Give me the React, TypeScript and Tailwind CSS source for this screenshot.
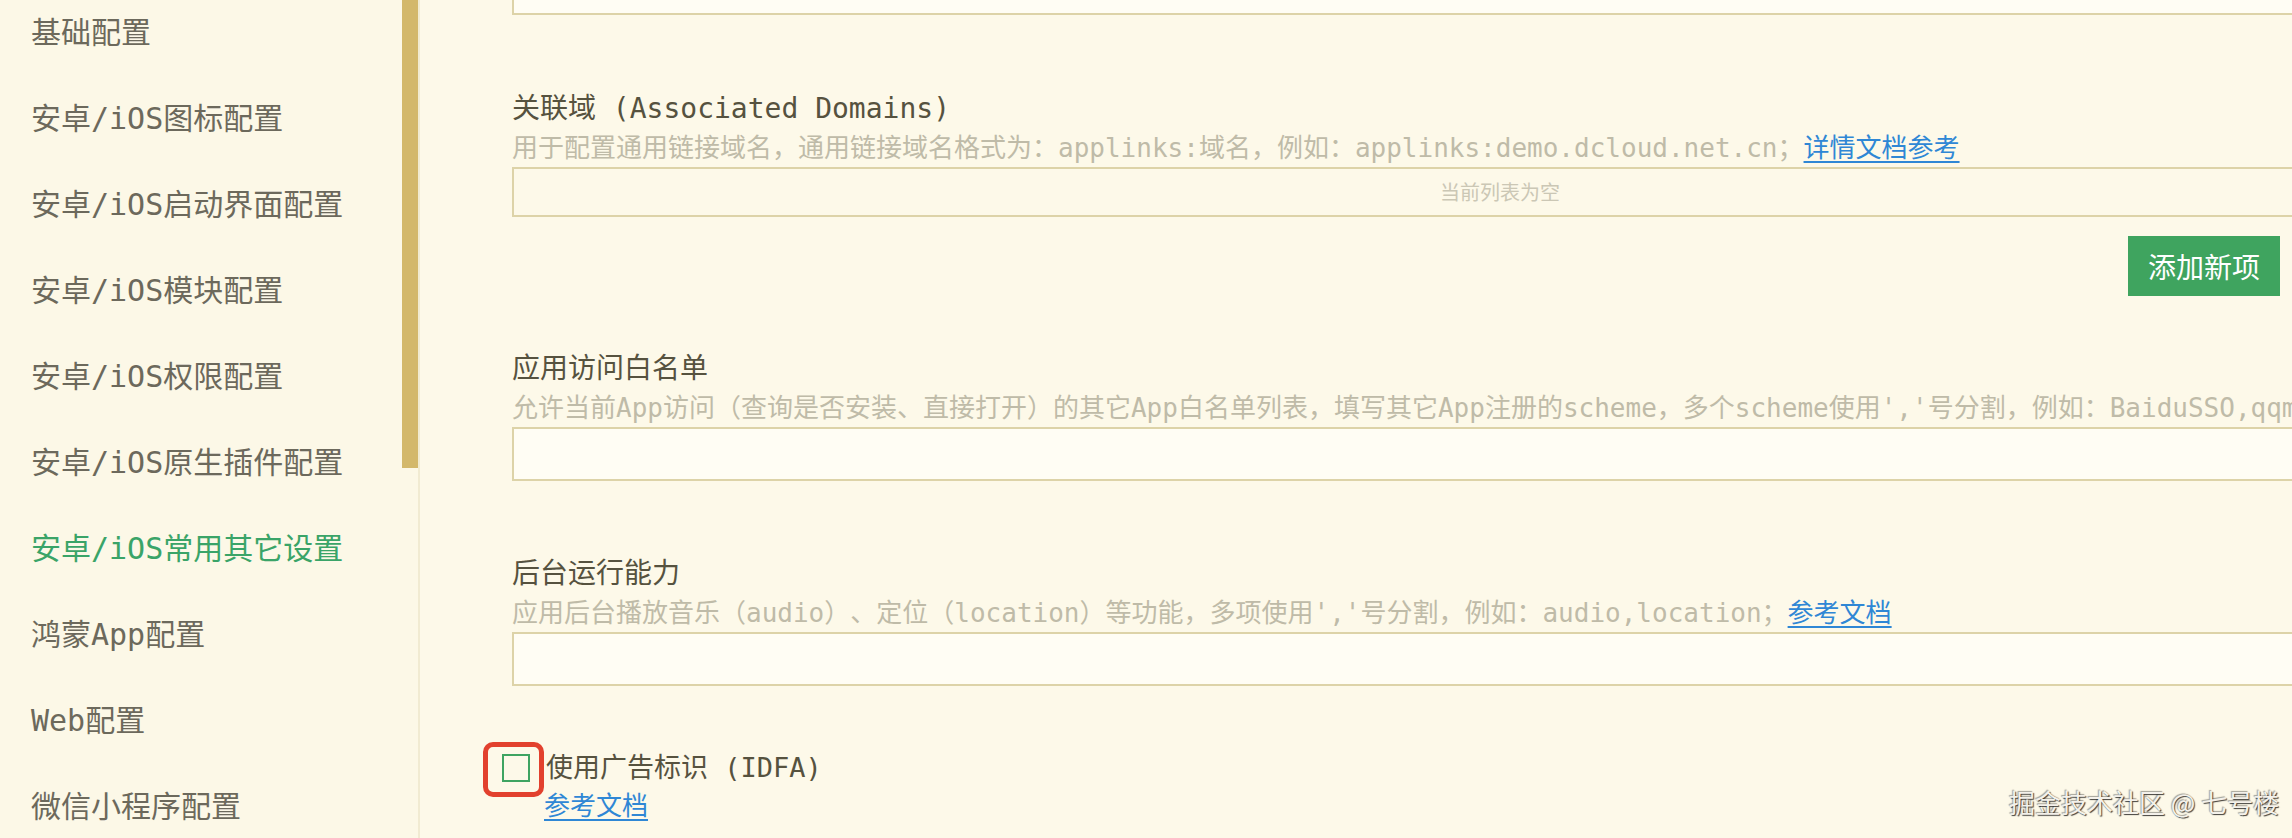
import React from 'react'

const menu = [
  '基础配置',
  '安卓/iOS图标配置',
  '安卓/iOS启动界面配置',
  '安卓/iOS模块配置',
  '安卓/iOS权限配置',
  '安卓/iOS原生插件配置',
  '安卓/iOS常用其它设置',
  '鸿蒙App配置',
  'Web配置',
  '微信小程序配置',
]

const ACTIVE = '安卓/iOS常用其它设置'

function Field({ label, children }: { label: string; children: React.ReactNode }) {
  return (
    <div>
      <div className="h-[40px] whitespace-nowrap text-[28px] leading-[40px] text-[#56523f]">{label}</div>
      <div className="h-[38px] whitespace-nowrap text-[26px] leading-[38px] text-[#bfbba8]">{children}</div>
    </div>
  )
}

function DocLink({ children }: { children: React.ReactNode }) {
  return (
    <a href="#" className="text-[#2f87d5] underline underline-offset-[4px] decoration-[2px]">
      {children}
    </a>
  )
}

export default function App() {
  return (
    <div className="relative flex h-[838px] w-[2292px] overflow-hidden bg-[#fdf9e9] font-['DejaVu_Sans_Mono','Noto_Sans_CJK_SC',monospace] [text-spacing-trim:space-all]">
      {/* 左侧菜单 */}
      <aside className="w-[402px] shrink-0 overflow-hidden bg-[#fcf8e7]">
        <ul className="-mt-[11px] pl-[31px]">
          {menu.map((item) => (
            <li
              key={item}
              className={
                'flex h-[86px] items-center whitespace-nowrap text-[30px] ' +
                (item === ACTIVE ? 'text-[#3aa468]' : 'text-[#6c695c]')
              }
            >
              {item}
            </li>
          ))}
        </ul>
      </aside>

      {/* 滚动条 */}
      <div className="w-[16px] shrink-0 bg-[#fcf8e7]">
        <div className="h-[468px] w-full bg-[#d3b86b]" />
      </div>
      <div className="w-[2px] shrink-0 bg-[#f1ebd2]" />

      {/* 内容区 */}
      <main className="flex-1 overflow-hidden pl-[92px]">
        <div className="-mt-[39px] h-[54px] w-[1976px] border-2 border-[#ddd3a8] bg-[#fffdf4]" />

        <div className="mt-[74px]">
          <Field label="关联域 (Associated Domains)">
            用于配置通用链接域名，通用链接域名格式为：applinks:域名，例如：applinks:demo.dcloud.net.cn；<DocLink>详情文档参考</DocLink>
          </Field>
          <div className="flex h-[50px] w-[1976px] items-center justify-center border-2 border-[#ddd3a8] font-['Noto_Sans_CJK_SC',sans-serif] text-[20px] text-[#cbc7b5]">
            当前列表为空
          </div>
          <div className="mt-[19px] flex w-[1768px] justify-end">
            <button className="h-[60px] w-[152px] bg-[#3fa45f] font-['Noto_Sans_CJK_SC',sans-serif] text-[28px] text-white">
              添加新项
            </button>
          </div>
        </div>

        <div className="mt-[53px]">
          <Field label="应用访问白名单">
            允许当前App访问（查询是否安装、直接打开）的其它App白名单列表，填写其它App注册的scheme，多个scheme使用','号分割，例如：BaiduSSO,qqmusic；<DocLink>参考文档</DocLink>
          </Field>
          <div className="h-[54px] w-[1976px] border-2 border-[#ddd3a8] bg-[#fffdf4]" />
        </div>

        <div className="mt-[73px]">
          <Field label="后台运行能力">
            应用后台播放音乐（audio）、定位（location）等功能，多项使用','号分割，例如：audio,location；<DocLink>参考文档</DocLink>
          </Field>
          <div className="h-[54px] w-[1976px] border-2 border-[#ddd3a8] bg-[#fffdf4]" />
        </div>

        <div className="mt-[62px]">
          <div className="-ml-[10px] flex h-[40px] items-center">
            <div className="relative h-[28px] w-[28px] shrink-0 border-2 border-[#3ea462]">
              {/* 标注框 */}
              <div className="absolute -left-[21px] -top-[14px] h-[55px] w-[61px] rounded-[10px] border-[5px] border-[#e2412e]" />
            </div>
            <span className="ml-[16px] whitespace-nowrap text-[27px] leading-[40px] text-[#56523f]">
              使用广告标识 (IDFA)
            </span>
          </div>
          <div className="ml-[32px] text-[26px] leading-[36px]">
            <DocLink>参考文档</DocLink>
          </div>
        </div>
      </main>

      {/* 水印 */}
      <div className="absolute left-[2009px] top-[785px] whitespace-nowrap font-['Noto_Sans_CJK_SC',sans-serif] text-[26px] leading-[34px] text-[#f4f1ea] [text-shadow:1px_1px_1px_rgba(0,0,0,0.75),-1px_-1px_1px_rgba(0,0,0,0.35)]">
        掘金技术社区 @ 七号楼
      </div>
    </div>
  )
}
